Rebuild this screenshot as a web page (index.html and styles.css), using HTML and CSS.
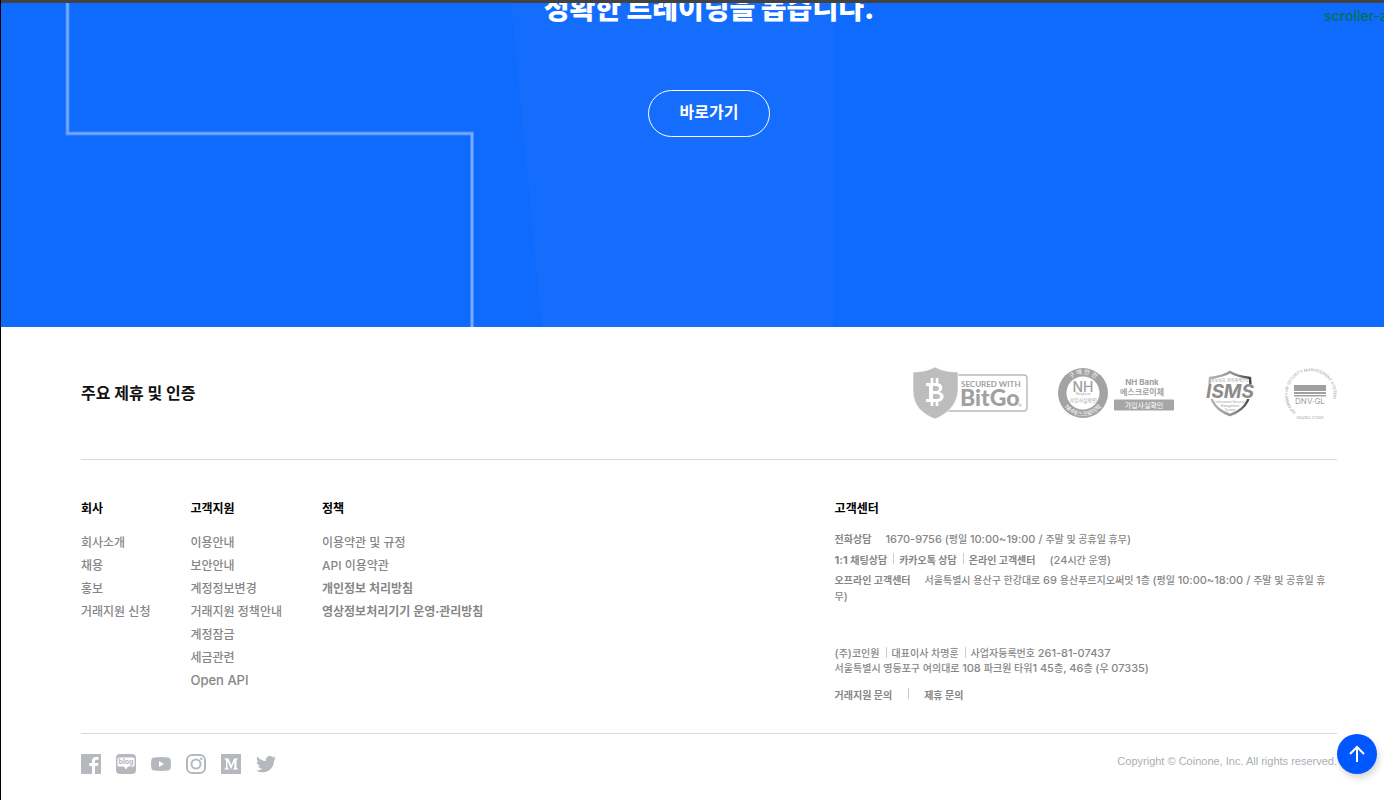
FILE: index.html
```html
<!DOCTYPE html>
<html lang="ko">
<head>
<meta charset="utf-8">
<meta name="viewport" content="width=device-width, initial-scale=1">
<title>코인원</title>
<link rel="stylesheet" href="styles.css">
</head>
<body>
<section class="hero">
  <svg class="hero-art" width="834" height="324" viewBox="0 0 834 324" aria-hidden="true">
    <path d="M510 0H832V324H541Z" fill="#146dfc"/>
    <path d="M66.500 0V130.500H471V324" fill="none" stroke="#4189fe" stroke-width="4"/>
    <path d="M66.500 0V130.500H471V324" fill="none" stroke="#78acff" stroke-width="2"/>
  </svg>
  <h2 class="hero-title">정확한 트레이딩을 돕습니다.</h2>
  <a class="hero-button" href="#">바로가기</a>
  <span class="marker">scroller-a</span>
</section>
<footer class="footer">
  <section class="partners">
    <h2 class="partners-title">주요 제휴 및 인증</h2>
    <div class="logos">
      <svg width="116" height="52" viewBox="0 0 116 52" role="img" aria-label="Secured with BitGo">
        <rect x="30" y="8" width="85" height="36" rx="3" fill="#fff" stroke="#b9b9b9" stroke-width="1.4"/>
        <path d="M23 0C30 4 38 5 46 5V24C45 38 35 47 23 52C10 47 1 38 1 24V5C8 5 16 4 23 0Z" fill="#bdbdbd" stroke="#fff" stroke-width=".6"/>
        <path d="M14 16H24C32 16 32 24 27 25C34 26 33 35 25 35H14V32H17V19H14ZM21 19V24H24C28 24 28 19 24 19ZM21 27V32H25C29 32 29 27 25 27Z" fill="#fff" fill-rule="evenodd"/>
        <path d="M20 11V17M25 11V17M20 34V39M25 34V39" stroke="#fff" stroke-width="2.6"/>
        <text x="49" y="20" class="logo-text logo-light" font-size="8">SECURED WITH</text>
        <text x="48" y="39" class="logo-text logo-heavy" font-size="23">BitGo</text>
        <circle cx="108" cy="38" r="1.200" fill="none" stroke="#aaa" stroke-width=".6"/>
      </svg>
      <svg width="118" height="52" viewBox="0 0 118 52" role="img" aria-label="NH Bank 에스크로이체">
        <defs>
          <path id="nh-top" d="M7 26A19 19 0 0 1 45 26"/>
          <path id="nh-bottom" d="M3 26A23 23 0 0 0 49 26"/>
        </defs>
        <circle cx="26" cy="26" r="25" fill="#a3a3a3"/>
        <circle cx="26" cy="26" r="16.500" fill="#fff"/>
        <text class="logo-text logo-white" font-size="6" text-anchor="middle"><textPath href="#nh-top" startOffset="50%">구 매 안 전</textPath></text>
        <text class="logo-text logo-white" font-size="6" text-anchor="middle"><textPath href="#nh-bottom" startOffset="50%">NH에스크로이체</textPath></text>
        <text x="26" y="25" class="logo-text logo-medium" font-size="14" text-anchor="middle">NH</text>
        <text x="26" y="28" class="logo-text" font-size="3" text-anchor="middle">Nonghyup</text>
        <text x="26" y="35" class="logo-text" font-size="5" text-anchor="middle">가입사실확인</text>
        <text x="85" y="18" class="logo-text logo-bold" font-size="8" text-anchor="middle">NH Bank</text>
        <text x="85" y="28" class="logo-text logo-bold" font-size="8" text-anchor="middle">에스크로이체</text>
        <rect x="57" y="32.500" width="60" height="11" rx="1" fill="#a6a6a6"/>
        <text x="87" y="41" class="logo-text logo-white" font-size="7" text-anchor="middle">가입사실확인</text>
      </svg>
      <svg width="52" height="52" viewBox="0 0 52 52" role="img" aria-label="ISMS">
        <defs>
          <linearGradient id="shield" x1="0" y1="0" x2="1" y2="0">
            <stop offset="0" stop-color="#b5b5b5"/><stop offset=".6" stop-color="#8f8f8f"/><stop offset="1" stop-color="#444"/>
          </linearGradient>
        </defs>
        <path d="M26 5C32 9 39 10 46 11C48 29 44 42 26 48C8 42 4 29 6 11C13 10 20 9 26 5Z" fill="#fff" stroke="url(#shield)" stroke-width="2.400"/>
        <path d="M0 17H52V32H0Z" fill="#fff"/>
        <text x="26" y="15" class="logo-text" font-size="4" text-anchor="middle">정보보호 관리체계인증</text>
        <text x="26" y="31" class="logo-text logo-italic" font-size="19" text-anchor="middle">ISMS</text>
        <text x="26" y="36" class="logo-text" font-size="3" text-anchor="middle">Information Security</text>
        <text x="26" y="40" class="logo-text" font-size="3" text-anchor="middle">Management</text>
        <text x="26" y="44" class="logo-text" font-size="3" text-anchor="middle">System</text>
      </svg>
      <svg width="54" height="54" viewBox="2 0 54 54" role="img" aria-label="DNV GL ISO/IEC 27001">
        <defs><path id="dnv-ring" d="M13 46A23 23 0 1 1 42 46"/></defs>
        <text class="logo-text" font-size="4"><textPath href="#dnv-ring">INFORMATION SECURITY MANAGEMENT SYSTEM</textPath></text>
        <path d="M11 19H43V25H11ZM11 26H43V28H11ZM11 29H43V30.500H11Z" fill="#a0a0a0"/>
        <text x="27" y="38" class="logo-text" font-size="8" text-anchor="middle">DNV·GL</text>
        <text x="27" y="53" class="logo-text" font-size="4" text-anchor="middle">ISO/IEC 27001</text>
      </svg>
    </div>
  </section>
  <section class="directory">
    <nav class="menus" aria-label="사이트 메뉴">
      <div class="menu">
        <h3>회사</h3>
        <ul>
          <li><a href="#">회사소개</a></li>
          <li><a href="#">채용</a></li>
          <li><a href="#">홍보</a></li>
          <li><a href="#">거래지원 신청</a></li>
        </ul>
      </div>
      <div class="menu">
        <h3>고객지원</h3>
        <ul>
          <li><a href="#">이용안내</a></li>
          <li><a href="#">보안안내</a></li>
          <li><a href="#">계정정보변경</a></li>
          <li><a href="#">거래지원 정책안내</a></li>
          <li><a href="#">계정잠금</a></li>
          <li><a href="#">세금관련</a></li>
          <li><a class="latin" href="#">Open API</a></li>
        </ul>
      </div>
      <div class="menu">
        <h3>정책</h3>
        <ul>
          <li><a href="#">이용약관 및 규정</a></li>
          <li><a href="#">API 이용약관</a></li>
          <li><a class="strong" href="#">개인정보 처리방침</a></li>
          <li><a class="strong" href="#">영상정보처리기기 운영·관리방침</a></li>
        </ul>
      </div>
    </nav>
    <div class="support">
      <h3>고객센터</h3>
      <p class="phone"><b class="label">전화상담</b><span class="num">1670-9756 (</span>평일 <span class="num">10:00~19:00 / </span>주말 및 공휴일 휴무<span class="num">)</span></p>
      <p class="chat"><a href="#"><span class="num">1:1 </span>채팅상담</a><a href="#">카카오톡 상담</a><a class="label" href="#">온라인 고객센터</a><span><span class="num">(24</span>시간 운영<span class="num">)</span></span></p>
      <p class="offline"><b class="label">오프라인 고객센터</b>서울특별시 용산구 한강대로 <span class="num">69 </span>용산푸르지오써밋 <span class="num">1</span>층 <span class="num">(</span>평일 <span class="num">10:00~18:00 / </span>주말 및 공휴일 휴무<span class="num">)</span></p>
      <address class="company">
        <p class="facts"><span><span class="num">(</span>주<span class="num">)</span>코인원</span><span>대표이사 차명훈</span><span>사업자등록번호 <span class="num">261-81-07437</span></span></p>
        <p>서울특별시 영등포구 여의대로 <span class="num">108 </span>파크원 타워<span class="num">1 45</span>층<span class="num">, 46</span>층 <span class="num">(</span>우 <span class="num">07335)</span></p>
      </address>
      <p class="inquiry"><a href="#">거래지원 문의</a><a href="#">제휴 문의</a></p>
    </div>
  </section>
  <section class="bottom">
    <div class="social">
      <a href="#" aria-label="Facebook"><svg width="20" height="20" viewBox="0 0 20 20"><path fill-rule="evenodd" d="M1 0H19Q20 0 20 1V19Q20 20 19 20H14V12H17L17.400 9H14V7.300C14 6.200 14.500 5.800 15.500 5.800H17.500V3.100L15.300 3C12.400 3 11 4.600 11 7V9H8.300V12H11V20H1Q0 20 0 19V1Q0 0 1 0Z"/></svg></a>
      <a href="#" aria-label="Blog"><svg width="20" height="20" viewBox="0 0 20 20"><rect width="20" height="20" rx="4"/><path fill="#fff" d="M3 3.500H17Q18.500 3.500 18.500 5V11Q18.500 12.500 17 12.500H12L10 15.500L8 12.500H3Q1.500 12.500 1.500 11V5Q1.500 3.500 3 3.500Z"/><text class="blog-text" x="10" y="10" font-size="7" text-anchor="middle">blog</text></svg></a>
      <a href="#" aria-label="YouTube"><svg width="20" height="20" viewBox="0 0 20 20"><path fill-rule="evenodd" d="M3 3.500Q10 2.700 17 3.500Q19.500 3.700 19.700 6Q20.200 10 19.700 14Q19.500 16.300 17 16.500Q10 17.300 3 16.500Q.5 16.300 .3 14Q-.2 10 .3 6Q.5 3.700 3 3.500ZM8 7V13L13 10Z"/></svg></a>
      <a href="#" aria-label="Instagram"><svg width="20" height="20" viewBox="0 0 20 20"><g fill="none" stroke="#b5b9be" stroke-width="2"><rect x="1" y="1" width="18" height="18" rx="5"/><circle cx="10" cy="10" r="4.500"/></g><circle cx="15.300" cy="4.700" r="1.200"/></svg></a>
      <a href="#" aria-label="Medium"><svg width="20" height="20" viewBox="0 0 20 20"><path fill-rule="evenodd" d="M0 0H20V20H0ZM3.500 4.500V5L5 6.500V13.500L3.500 15V15.500H8V15L6.500 13.500V7L10 15.500L13.300 7.500V14L12 15V15.500H17V15L15.500 13.800V6L17 5V4.500H13L10.300 11L7.500 4.500Z"/></svg></a>
      <a href="#" aria-label="Twitter"><svg width="20" height="20" viewBox="0 0 20 20"><path d="M20 3.900C19.300 4.200 18.500 4.500 17.600 4.600C18.500 4.100 19.100 3.200 19.400 2.300C18.600 2.800 17.700 3.100 16.800 3.300C14.100 .4 9.200 2.300 9.900 7C6.500 6.800 3.500 5.200 1.400 2.700C.3 4.600 .9 7 2.700 8.200C2 8.200 1.400 8 .8 7.700C.8 9.700 2.200 11.400 4.100 11.800C3.500 12 2.900 12 2.300 11.900C2.800 13.500 4.300 14.700 6.100 14.700C4.400 16 2.200 16.600 0 16.400C8 21.300 18.100 16.400 18 6.400C18.800 5.700 19.400 4.800 20 3.900Z"/></svg></a>
    </div>
    <p class="copyright">Copyright © Coinone, Inc. All rights reserved.</p>
  </section>
</footer>
<button class="to-top" type="button" aria-label="맨 위로"><svg width="18" height="18" viewBox="0 0 18 18"><path d="M9 17V2M2 9L9 2L16 9" fill="none" stroke="#fff" stroke-width="2"/></svg></button>
</body>
</html>
```

FILE: styles.css
```css
* { box-sizing: border-box; }
html { background: #fff; }
body {
  margin: 0;
  min-height: 100vh;
  border-left: 1px solid #000;
  background: #fff;
  color: #868686;
  font-family: "Inter", "Noto Sans CJK KR", sans-serif;
  font-size: 12px;
  overflow-x: hidden;
}
h2, h3, p, ul { margin: 0; padding: 0; }
ul { list-style: none; }
a { color: inherit; text-decoration: none; }
svg { display: block; }
address { font-style: normal; }

.hero {
  position: relative;
  display: flex;
  flex-direction: column;
  align-items: center;
  height: 327px;
  padding: 0 47px 0 80px;
  border-top: 3px solid #424242;
  background: #0f6bfd;
  color: #fff;
  overflow: hidden;
}
.hero-art { position: absolute; left: 0; top: 0; }
.hero-title {
  position: relative;
  margin-top: -14px;
  font-size: 28px;
  line-height: 40px;
  font-weight: 900;
  white-space: nowrap;
}
.hero-button {
  position: relative;
  width: 122px;
  margin-top: 61px;
  padding-bottom: 2px;
  border: 1px solid #fff;
  border-radius: 24px;
  font-size: 16px;
  line-height: 43px;
  font-weight: 700;
  text-align: center;
}
.marker {
  position: absolute;
  top: 4px;
  right: -4px;
  color: #0a6e50;
  font-size: 14px;
  line-height: 18px;
  font-weight: 500;
}

.footer { padding: 0 47px 0 80px; }
.partners {
  display: flex;
  justify-content: space-between;
  align-items: center;
  height: 133px;
  border-bottom: 1px solid #d9d9d9;
}
.partners-title { color: #111; font-size: 16px; line-height: 24px; }
.logos { display: flex; align-items: center; gap: 29px; margin-right: -2px; }
.logo-text { fill: #a0a0a0; font-family: "Inter", "Noto Sans CJK KR", sans-serif; }
.logo-light { font-family: "Lato", sans-serif; font-weight: 700; }
.logo-medium { font-weight: 500; }
.logo-bold { font-weight: 700; }
.logo-heavy { font-family: "Lato", sans-serif; font-weight: 900; }
.logo-italic { fill: #8c8c8c; font-weight: 700; font-style: italic; }
.logo-white { fill: #fff; }

.directory {
  display: grid;
  grid-template-columns: 3fr 2fr;
  height: 274px;
  padding-top: 39px;
  border-bottom: 1px solid #d9d9d9;
}
.menus { display: flex; gap: 40px; }
h3 { color: #000; font-size: 12px; line-height: 20px; }
.menu ul { margin-top: 12px; }
.menu li { height: 23px; line-height: 23px; white-space: nowrap; font-weight: 500; }
.latin { font-size: 13px; }
.menu .strong { font-weight: 700; }

.support { padding-right: 3px; font-size: 10px; font-weight: 500; line-height: 16px; }
.num { font-size: 11px; }
.label { margin-right: 14px; font-weight: 700; }
.phone { margin-top: 12px; }
.chat, .facts, .inquiry { display: flex; }
.chat { margin-top: 5px; }
.chat a, .inquiry a { font-weight: 700; }
.chat a + a, .facts > span + span {
  margin-left: 6px;
  padding-left: 6px;
  background: linear-gradient(#ccc, #ccc) left 1px / 1px 11px no-repeat;
}
.offline { margin-top: 4px; }
.company { margin-top: 42px; line-height: 15px; }
.inquiry { margin-top: 11px; }
.inquiry a + a {
  margin-left: 16px;
  padding-left: 16px;
  background: linear-gradient(#ccc, #ccc) left 1px / 1px 11px no-repeat;
}

.bottom { display: flex; justify-content: space-between; padding-top: 20px; }
.social { display: flex; gap: 15px; fill: #b5b9be; }
.blog-text { font-family: "Inter", sans-serif; font-weight: 700; }
.copyright { color: #a9afb5; font-family: "Liberation Sans", sans-serif; font-size: 11px; line-height: 14px; }
.to-top {
  position: fixed;
  right: 7px;
  bottom: 26px;
  display: grid;
  place-items: center;
  width: 40px;
  height: 40px;
  padding: 0;
  border: 0;
  border-radius: 50%;
  background: #0057ff;
  box-shadow: 2px 4px 6px rgba(0, 0, 0, .16);
}
```
